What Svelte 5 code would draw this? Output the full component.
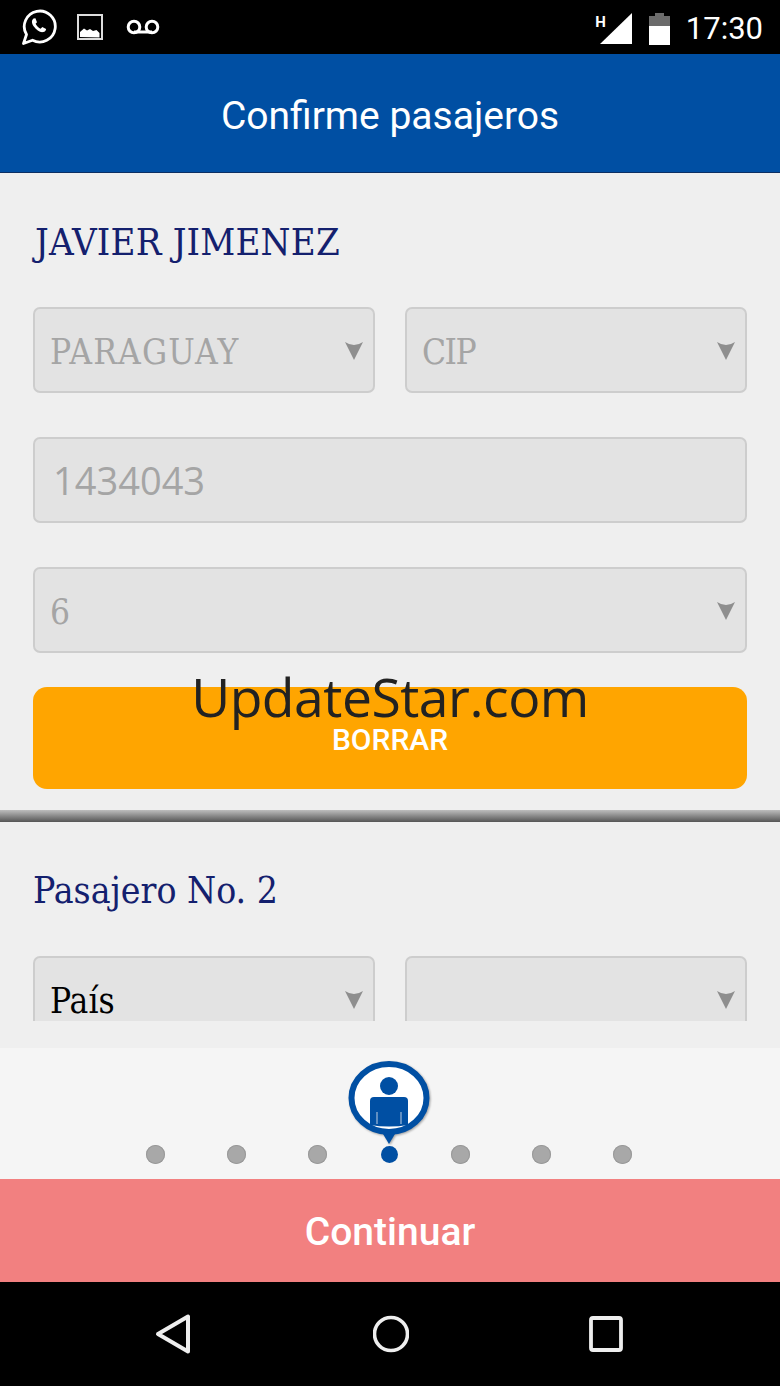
<script>
  const leftDots = [0, 1, 2];
  const rightDots = [0, 1, 2];
</script>

{#snippet arrow()}
  <svg class="arrow" viewBox="0 0 18 19" width="18" height="19">
    <path d="M0 1Q9 7 18 1L9 19z" fill="#8e8e8e"/>
  </svg>
{/snippet}

<div class="phone">
  <div class="statusbar">
    <div class="status-left">
      <svg class="ic-wa" viewBox="0 0 36 38" width="36" height="38">
        <path d="M2.500 35.500l3-9a15.500 15.500 0 1 1 6 5.700z" fill="none" stroke="#fff" stroke-width="2.800" stroke-linejoin="round"/>
        <path d="M12.500 10.500c-2 1.500-2.200 4.500.3 8 2.700 3.800 6.300 6.300 9.500 5.600 1.600-.4 2.800-1.600 2.800-3.200l-3.800-1.900-1.700 1.800c-2-.8-4-2.800-5-5l1.400-1.600-1.600-3.900z" fill="#fff"/>
      </svg>
      <svg class="ic-img" viewBox="0 0 26 26" width="26" height="26">
        <rect x="1" y="1" width="24" height="24" fill="none" stroke="#ddd" stroke-width="2"/>
        <path d="M3 23v-5l4-3.500 3 2 3-1.500 3 2 3.500-1 3 3v4.500z" fill="#fff"/>
      </svg>
      <svg class="ic-vm" viewBox="0 0 34 16" width="34" height="16">
        <circle cx="8" cy="8" r="5.800" fill="none" stroke="#fff" stroke-width="3"/>
        <circle cx="26" cy="8" r="5.800" fill="none" stroke="#fff" stroke-width="3"/>
        <path d="M8 13h18" stroke="#fff" stroke-width="3"/>
      </svg>
    </div>
    <div class="status-right">
      <span class="net">H</span>
      <svg class="ic-signal" viewBox="0 0 32 31" width="32" height="31">
        <path d="M0 31L32 0v31z" fill="#fff"/>
      </svg>
      <svg class="ic-batt" viewBox="0 0 21 32" width="21" height="32">
        <path d="M0 3h6V0h9v3h6v12H0z" fill="#6b6b6b"/>
        <path d="M0 13h21v19H0z" fill="#fff"/>
      </svg>
      <span class="clock">17:30</span>
    </div>
  </div>

  <header class="appbar">Confirme pasajeros</header>

  <main class="content">
    <section class="passenger first">
      <h2 class="pax-name">JAVIER JIMENEZ</h2>
      <div class="two-col">
        <div class="field disabled"><span class="spaced">PARAGUAY</span>{@render arrow()}</div>
        <div class="field disabled"><span class="tight">CIP</span>{@render arrow()}</div>
      </div>
      <div class="field disabled sans"><span>1434043</span></div>
      <div class="field disabled"><span>6</span>{@render arrow()}</div>
      <button class="btn-clear">BORRAR</button>
    </section>

    <div class="divider"></div>

    <section class="passenger second">
      <h2 class="pax-title">Pasajero No. 2</h2>
      <div class="two-col">
        <div class="field"><span>País</span>{@render arrow()}</div>
        <div class="field"><span></span>{@render arrow()}</div>
      </div>
    </section>
  </main>

  <div class="gap"></div>

  <div class="steps">
    {#each leftDots as d}
      <span class="dot"></span>
    {/each}
    <span class="dot active">
      <span class="pin">
        <svg viewBox="0 0 82 84" width="82" height="84">
          <path d="M32 68L41 83L50 68z" fill="#004fa3"/>
          <ellipse cx="41" cy="37" rx="37.500" ry="34" fill="#fff" stroke="#004fa3" stroke-width="6"/>
          <circle cx="41" cy="25" r="9" fill="#004fa3"/>
          <path d="M22 40a4 4 0 0 1 4-4h30a4 4 0 0 1 4 4v24q-19 3-38 0z" fill="#004fa3"/>
          <path d="M29 51v12M53 51v12" stroke="#9fb9d8" stroke-width="1.200"/>
        </svg>
      </span>
    </span>
    {#each rightDots as d}
      <span class="dot"></span>
    {/each}
  </div>

  <button class="btn-continue">Continuar</button>

  <nav class="navbar">
    <svg viewBox="0 0 38 42" width="38" height="42">
      <path d="M4 21L34 3.500v35z" fill="none" stroke="#eee" stroke-width="4" stroke-linejoin="round"/>
    </svg>
    <svg viewBox="0 0 36 38" width="36" height="38">
      <circle cx="18" cy="19" r="16.500" fill="none" stroke="#eee" stroke-width="3.600"/>
    </svg>
    <svg viewBox="0 0 36 36" width="36" height="36">
      <rect x="2" y="2" width="30" height="32" rx="2" fill="none" stroke="#eee" stroke-width="3.800"/>
    </svg>
  </nav>

  <div class="watermark">UpdateStar.com</div>
</div>

<style>
  :global(body) {
    margin: 0;
  }

  .phone {
    position: relative;
    width: 780px;
    height: 1386px;
    overflow: hidden;
    display: flex;
    flex-direction: column;
    background: #efefef;
    font-family: "DejaVu Serif Condensed", "DejaVu Serif", serif;
  }

  /* STATUS BAR */
  .statusbar {
    height: 54px;
    flex: none;
    background: #000;
    color: #fff;
    display: flex;
    justify-content: space-between;
    align-items: center;
    padding: 0 17px 0 21px;
    box-sizing: border-box;
  }

  .status-left {
    display: flex;
    align-items: center;
  }

  .ic-img {
    margin-left: 20px;
  }

  .ic-vm {
    margin-left: 23px;
  }

  .status-right {
    display: flex;
    align-items: center;
    font-family: Roboto, sans-serif;
    padding-top: 3px;
  }

  .net {
    font-size: 15px;
    font-weight: 700;
    margin-bottom: 13px;
    margin-right: -6px;
  }

  .ic-batt {
    margin-left: 17px;
  }

  .clock {
    font-size: 31px;
    margin-left: 16px;
  }

  /* HEADER */
  .appbar {
    height: 119px;
    flex: none;
    background: #004fa3;
    color: #fff;
    display: flex;
    align-items: center;
    justify-content: center;
    font-family: Roboto, sans-serif;
    font-size: 39px;
    padding-top: 5px;
    border-bottom: 1px solid #0c2f63;
    box-sizing: border-box;
  }

  /* FORM */
  .content {
    height: 848px;
    flex: none;
    overflow: hidden;
    box-sizing: border-box;
  }

  .passenger {
    padding: 0 33px;
  }

  .first {
    padding-top: 45px;
    display: flex;
    flex-direction: column;
    height: 637px;
    box-sizing: border-box;
  }

  .pax-name,
  .pax-title {
    margin: 0;
    font-weight: 400;
    color: #14206e;
    line-height: 48px;
  }

  .pax-name {
    font-size: 38px;
    margin-bottom: 41px;
    padding-left: 2px;
    letter-spacing: 0.2px;
  }

  .pax-title {
    font-size: 37px;
    margin-bottom: 41px;
  }

  .two-col {
    display: grid;
    grid-template-columns: 342px 342px;
    gap: 30px;
  }

  .field {
    position: relative;
    height: 86px;
    box-sizing: border-box;
    display: flex;
    align-items: center;
    padding: 3px 15px 0;
    background: #e3e3e3;
    border: 2px solid #cdcdcd;
    border-radius: 7px;
    font-size: 35px;
    color: #000;
  }

  .spaced {
    letter-spacing: 1.2px;
  }

  .tight {
    letter-spacing: -1.5px;
  }

  .disabled {
    color: #a5a5a5;
    margin-bottom: 44px;
  }

  .two-col .disabled {
    margin-bottom: 0;
  }

  .first .two-col {
    margin-bottom: 44px;
  }

  .sans {
    font-family: "Open Sans", sans-serif;
    font-size: 38px;
    padding: 0 0 0 18px;
  }

  .arrow {
    position: absolute;
    right: 10px;
    top: 32px;
  }

  .btn-clear {
    margin-top: -10px;
    height: 102px;
    border: 0;
    border-radius: 14px;
    background: #ffa500;
    color: #fff;
    font-family: Roboto, sans-serif;
    font-size: 30px;
    font-weight: 500;
    padding: 2px 0 0;
  }

  .divider {
    height: 12px;
    background: linear-gradient(#bdbdbd, #555);
  }

  .second {
    padding-top: 45px;
  }

  .gap {
    height: 27px;
    flex: none;
    background: #efefef;
  }

  /* STEPPER */
  .steps {
    height: 131px;
    flex: none;
    background: #f5f5f5;
    display: flex;
    align-items: flex-end;
    justify-content: center;
    padding: 0 2px 15px 0;
    gap: 62px;
    box-sizing: border-box;
  }

  .dot {
    position: relative;
    width: 19px;
    height: 19px;
    border-radius: 50%;
    background: #a8a8a8;
    box-shadow: inset 0 0 0 1px #999;
  }

  .dot.active {
    width: 17px;
    height: 17px;
    margin: 0 -9px 1px -8px;
    background: #004fa3;
    box-shadow: none;
  }

  .pin {
    position: absolute;
    left: 50%;
    bottom: 18px;
    margin-left: -42px;
    display: block;
    height: 84px;
    filter: drop-shadow(1px 1px 1px rgba(0, 0, 0, 0.35));
  }

  .btn-continue {
    height: 103px;
    flex: none;
    border: 0;
    background: #f28080;
    color: #fff;
    font-family: Roboto, sans-serif;
    font-size: 39px;
    font-weight: 500;
    padding: 3px 0 0;
  }

  .navbar {
    flex: 1;
    background: #000;
    display: flex;
    align-items: center;
    justify-content: space-between;
    padding: 0 155px 0 154px;
  }

  .watermark {
    position: absolute;
    left: 0;
    right: 0;
    top: 661px;
    text-align: center;
    font-family: "Open Sans", sans-serif;
    font-size: 53.5px;
    line-height: 72px;
    color: #222;
    letter-spacing: -0.5px;
  }
</style>
